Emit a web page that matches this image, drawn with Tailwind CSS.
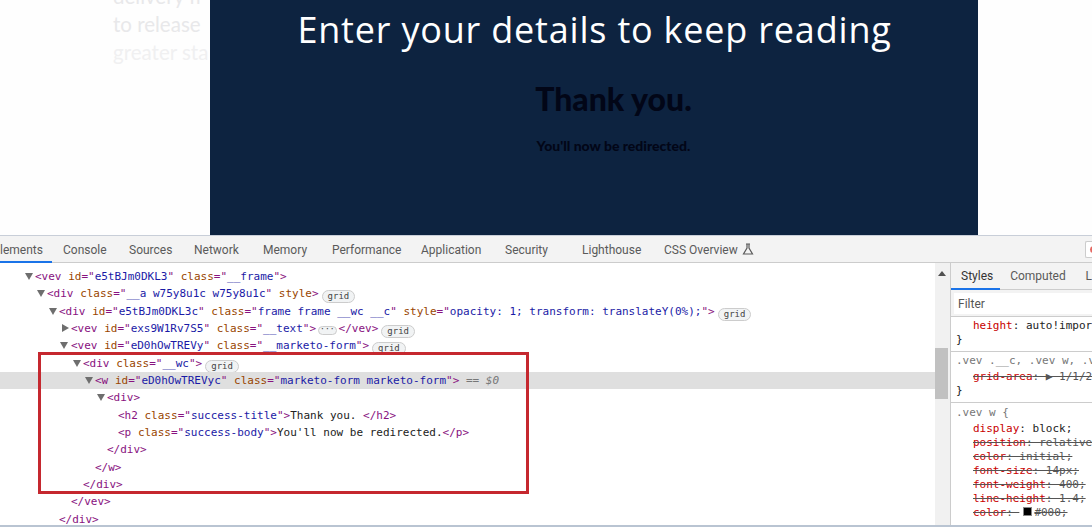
<!DOCTYPE html>
<html lang="en">

<head>
    <meta charset="UTF-8">
    <title>Thank you</title>
    <script src="https://cdn.jsdelivr.net/npm/@tailwindcss/browser@4"></script>
</head>

<body class="relative w-[1092px] h-[527px] overflow-hidden bg-white font-['Roboto',sans-serif]">

    <!-- page -->
    <div class="flex h-[235px] overflow-hidden bg-[#fefefe]">
        <div class="w-[210px] pl-[113px] -mt-[18px] overflow-hidden whitespace-nowrap font-['Lato',sans-serif] text-[20.5px] leading-[28px] text-[#e8e8ea]">
            <p>delivery fi</p>
            <p>to release</p>
            <p class="text-[#f0f0f1]">greater sta</p>
        </div>
        <div class="w-[768px] h-[235px] bg-[#0d2340] flex flex-col items-center">
            <h1 class="mt-[8px] ml-[1px] font-['Open_Sans',sans-serif] text-[36px] tracking-[0.8px] leading-[44px] text-white whitespace-nowrap">Enter your details to keep reading</h1>
            <h2 class="mt-[24px] ml-[39px] font-['Lato',sans-serif] font-black text-[32px] leading-[46px] text-[#020617]">Thank you.</h2>
            <p class="mt-[15px] ml-[39px] font-['Lato',sans-serif] font-black text-[14px] leading-[18px] text-[#020617]">You'll now be redirected.</p>
        </div>
    </div>

    <!-- devtools -->
    <div class="h-[292px] border-t border-[#c8ced8] flex flex-col">
        <div class="h-[27px] bg-[#f3f3f3] border-b border-[#cccccc] flex text-[12px] text-[#5a5a5a] leading-[28px] relative whitespace-nowrap">
            <div class="w-[52px] h-[27px] border-b-2 border-[#1a73e8]">lements</div>
            <span class="ml-[11px] w-[66px]">Console</span>
            <span class="w-[65px]">Sources</span>
            <span class="w-[69px]">Network</span>
            <span class="w-[69px]">Memory</span>
            <span class="w-[89px]">Performance</span>
            <span class="w-[84px]">Application</span>
            <span class="w-[77px]">Security</span>
            <span class="w-[82px]">Lighthouse</span>
            <span class="w-[78px]">CSS Overview</span>
            <svg class="mt-[7px]" width="12" height="12" viewBox="0 0 12 12" fill="none" stroke="#5a5a5a" stroke-width="1.2"><path d="M4 1h4M5 1v4L1.5 11h9L7 5V1"/></svg>
            <div class="absolute right-0 top-[5px] w-[7px] h-[17px] bg-white border border-r-0 border-[#cccccc] rounded-l-[2px] overflow-hidden">
                <div class="ml-[4px] mt-[4px] w-[7px] h-[7px] rounded-full bg-[#e46962]"></div>
            </div>
        </div>

        <div class="flex-1 flex min-h-0">
            <!-- dom tree -->
            <div class="w-[935px] h-full overflow-hidden font-['DejaVu_Sans_Mono',monospace] text-[11px] leading-[17.35px] text-[#881280] whitespace-nowrap pt-[5px]">
                <div class="h-[17.35px] pl-[35px] relative"><span class="absolute left-[25px] top-[5px] w-0 h-0 border-x-[4px] border-x-transparent border-t-[7px] border-t-[#6e6e6e]"></span>&lt;vev <span class="text-[#994500]">id</span>="<span class="text-[#1a1aa6]">e5tBJm0DKL3</span>" <span class="text-[#994500]">class</span>="<span class="text-[#1a1aa6]">__frame</span>"&gt;</div>
                <div class="h-[17.35px] pl-[47px] relative"><span class="absolute left-[37px] top-[5px] w-0 h-0 border-x-[4px] border-x-transparent border-t-[7px] border-t-[#6e6e6e]"></span>&lt;div <span class="text-[#994500]">class</span>="<span class="text-[#1a1aa6]">__a w75y8u1c w75y8u1c</span>" <span class="text-[#994500]">style</span>&gt;<span class="ml-[3px] inline-block h-[13px] leading-[11px] px-[5px] border border-[#cccccc] rounded-full bg-[#f1f3f4] text-[9px] text-[#444444] align-[-2px]">grid</span></div>
                <div class="h-[17.35px] pl-[59px] relative"><span class="absolute left-[49px] top-[5px] w-0 h-0 border-x-[4px] border-x-transparent border-t-[7px] border-t-[#6e6e6e]"></span>&lt;div <span class="text-[#994500]">id</span>="<span class="text-[#1a1aa6]">e5tBJm0DKL3c</span>" <span class="text-[#994500]">class</span>="<span class="text-[#1a1aa6]">frame frame __wc __c</span>" <span class="text-[#994500]">style</span>="<span class="text-[#1a1aa6]">opacity: 1; transform: translateY(0%);</span>"&gt;<span class="ml-[3px] inline-block h-[13px] leading-[11px] px-[5px] border border-[#cccccc] rounded-full bg-[#f1f3f4] text-[9px] text-[#444444] align-[-2px]">grid</span></div>
                <div class="h-[17.35px] pl-[71px] relative"><span class="absolute left-[62px] top-[4px] w-0 h-0 border-y-[4px] border-y-transparent border-l-[7px] border-l-[#6e6e6e]"></span>&lt;vev <span class="text-[#994500]">id</span>="<span class="text-[#1a1aa6]">exs9W1Rv7S5</span>" <span class="text-[#994500]">class</span>="<span class="text-[#1a1aa6]">__text</span>"&gt;<span class="inline-block h-[9px] leading-[5px] mx-[2px] px-[1px] border border-[#cccccc] rounded-full bg-[#f1f3f4] text-[8px] text-[#444444]">···</span>&lt;/vev&gt;<span class="ml-[3px] inline-block h-[13px] leading-[11px] px-[5px] border border-[#cccccc] rounded-full bg-[#f1f3f4] text-[9px] text-[#444444] align-[-2px]">grid</span></div>
                <div class="h-[17.35px] pl-[71px] relative"><span class="absolute left-[60px] top-[5px] w-0 h-0 border-x-[4px] border-x-transparent border-t-[7px] border-t-[#6e6e6e]"></span>&lt;vev <span class="text-[#994500]">id</span>="<span class="text-[#1a1aa6]">eD0hOwTREVy</span>" <span class="text-[#994500]">class</span>="<span class="text-[#1a1aa6]">__marketo-form</span>"&gt;<span class="ml-[3px] inline-block h-[13px] leading-[11px] px-[5px] border border-[#cccccc] rounded-full bg-[#f1f3f4] text-[9px] text-[#444444] align-[-2px]">grid</span></div>
                <div class="h-[17.35px] pl-[83px] relative"><span class="absolute left-[73px] top-[5px] w-0 h-0 border-x-[4px] border-x-transparent border-t-[7px] border-t-[#6e6e6e]"></span>&lt;div <span class="text-[#994500]">class</span>="<span class="text-[#1a1aa6]">__wc</span>"&gt;<span class="ml-[3px] inline-block h-[13px] leading-[11px] px-[5px] border border-[#cccccc] rounded-full bg-[#f1f3f4] text-[9px] text-[#444444] align-[-2px]">grid</span></div>
                <div class="h-[17.35px] pl-[95px] relative bg-[#dfdfdf]"><span class="absolute left-[85px] top-[5px] w-0 h-0 border-x-[4px] border-x-transparent border-t-[7px] border-t-[#6e6e6e]"></span>&lt;w <span class="text-[#994500]">id</span>="<span class="text-[#1a1aa6]">eD0hOwTREVyc</span>" <span class="text-[#994500]">class</span>="<span class="text-[#1a1aa6]">marketo-form marketo-form</span>"&gt; <span class="italic text-[#777777]">== $0</span></div>
                <div class="h-[17.35px] pl-[107px] relative"><span class="absolute left-[97px] top-[5px] w-0 h-0 border-x-[4px] border-x-transparent border-t-[7px] border-t-[#6e6e6e]"></span>&lt;div&gt;</div>
                <div class="h-[17.35px] pl-[118px]">&lt;h2 <span class="text-[#994500]">class</span>="<span class="text-[#1a1aa6]">success-title</span>"&gt;<span class="text-[#222222]">Thank you. </span>&lt;/h2&gt;</div>
                <div class="h-[17.35px] pl-[118px]">&lt;p <span class="text-[#994500]">class</span>="<span class="text-[#1a1aa6]">success-body</span>"&gt;<span class="text-[#222222]">You'll now be redirected.</span>&lt;/p&gt;</div>
                <div class="h-[17.35px] pl-[107px]">&lt;/div&gt;</div>
                <div class="h-[17.35px] pl-[95px]">&lt;/w&gt;</div>
                <div class="h-[17.35px] pl-[83px]">&lt;/div&gt;</div>
                <div class="h-[17.35px] pl-[71px]">&lt;/vev&gt;</div>
                <div class="h-[17.35px] pl-[59px]">&lt;/div&gt;</div>
            </div>

            <!-- scrollbar -->
            <div class="w-[15px] h-full bg-[#f1f1f1] flex flex-col items-center pr-[2px]">
                <span class="mt-[8px] w-0 h-0 border-x-[4px] border-x-transparent border-b-[5px] border-b-[#505050]"></span>
                <span class="mt-[72px] w-[13px] h-[51px] bg-[#c1c1c1]"></span>
            </div>

            <!-- styles pane -->
            <div class="flex-1 border-l border-[#cccccc] min-w-0 overflow-hidden">
                <div class="h-[27px] bg-[#f3f3f3] border-b border-[#cccccc] flex text-[12px] leading-[27px] text-[#5a5a5a] whitespace-nowrap">
                    <span class="w-[50px] pl-[10px] h-[27px] border-b-2 border-[#1a73e8] text-[#333333]">Styles</span>
                    <span class="ml-[10px] w-[77px]">Computed</span>
                    <span>L</span>
                </div>
                <div class="h-[27px] bg-[#f3f3f3] border-b border-[#cccccc] pl-[3px] pt-[3px]">
                    <div class="h-[21px] bg-white pl-[4px] text-[12px] leading-[22px] text-[#555555]">Filter</div>
                </div>
                <div class="font-['DejaVu_Sans_Mono',monospace] text-[11px] leading-[14px] text-[#222222] whitespace-nowrap">
                    <div class="border-b border-[#cccccc] h-[35px] pt-[2px]">
                        <div class="pl-[22px]"><span class="text-[#c80000]">height</span>: auto!important;</div>
                        <div class="pl-[5px]">}</div>
                    </div>
                    <div class="border-b border-[#cccccc] pt-[2px] h-[51px]">
                        <div class="pl-[5px] text-[#777777]">.vev .__c, .vev w, .vev</div>
                        <div class="pl-[22px] mt-[2px] line-through text-[#555555]"><span class="text-[#c80000]">grid-area</span>: ▶ 1/1/2/2;</div>
                        <div class="pl-[5px]">}</div>
                    </div>
                    <div class="pt-[3px]">
                        <div class="pl-[5px] mb-[2px] text-[#777777]">.vev w {</div>
                        <div class="pl-[22px]"><span class="text-[#c80000]">display</span>: block;</div>
                        <div class="pl-[22px] line-through text-[#555555]"><span class="text-[#c80000]">position</span>: relative;</div>
                        <div class="pl-[22px] line-through text-[#555555]"><span class="text-[#c80000]">color</span>: initial;</div>
                        <div class="pl-[22px] line-through text-[#555555]"><span class="text-[#c80000]">font-size</span>: 14px;</div>
                        <div class="pl-[22px] line-through text-[#555555]"><span class="text-[#c80000]">font-weight</span>: 400;</div>
                        <div class="pl-[22px] line-through text-[#555555]"><span class="text-[#c80000]">line-height</span>: 1.4;</div>
                        <div class="pl-[22px] line-through text-[#555555]"><span class="text-[#c80000]">color</span>: <span class="inline-block ml-[4px] mr-[2px] w-[9px] h-[9px] bg-black border border-[#888888]"></span>#000;</div>
                    </div>
                </div>
            </div>
        </div>
    </div>

    <!-- red annotation box and the window's bottom edge lie over the panel -->
    <div class="absolute left-[38px] top-[352px] w-[491px] h-[142px] border-[3px] border-[#c5282f]"></div>
    <div class="absolute left-0 right-0 bottom-0 h-[2px] bg-[#b9c4d2]"></div>

</body>

</html>
